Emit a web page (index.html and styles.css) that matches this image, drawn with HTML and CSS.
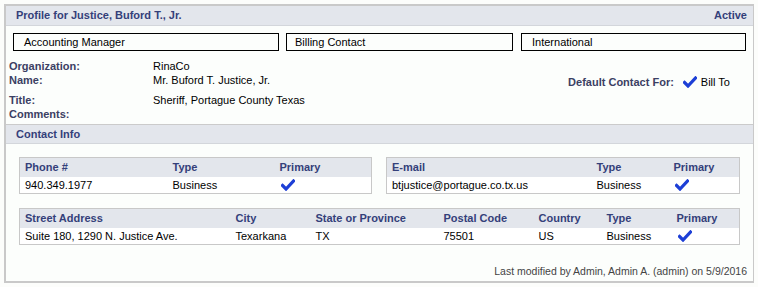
FILE: index.html
```html
<!DOCTYPE html>
<html lang="en">
<head>
    <meta charset="UTF-8">
    <title>Profile for Justice, Buford T., Jr.</title>
    <link rel="stylesheet" href="styles.css">
</head>
<body>
    <div class="panel">
        <div class="panel-head">
            <span>Profile for Justice, Buford T., Jr.</span>
            <span>Active</span>
        </div>
        <div class="tags">
            <div class="tag tag-1">Accounting Manager</div>
            <div class="tag tag-2">Billing Contact</div>
            <div class="tag tag-3">International</div>
        </div>
        <div class="fields">
            <div class="label">Organization:</div>
            <div class="value">RinaCo</div>
            <div></div>
            <div class="label name-row">Name:</div>
            <div class="value name-row">Mr. Buford T. Justice, Jr.</div>
            <div class="default-for name-row">
                <span class="label">Default Contact For:</span>
                <svg class="check" width="14" height="12" viewBox="0 0 14 12"><path d="M1.5 6.5 L5 10 L12.5 2" fill="none" stroke="#1d3fd6" stroke-width="3.2" stroke-linecap="square"/></svg>
                <span class="value">Bill To</span>
            </div>
            <div class="label">Title:</div>
            <div class="value">Sheriff, Portague County Texas</div>
            <div></div>
            <div class="label">Comments:</div>
            <div class="value"></div>
            <div></div>
        </div>
        <div class="section-head">Contact Info</div>
        <div class="contact-row">
            <table class="grid phone">
                <colgroup><col style="width:148px"><col style="width:107px"><col></colgroup>
                <tr><th>Phone #</th><th>Type</th><th>Primary</th></tr>
                <tr>
                    <td>940.349.1977</td>
                    <td>Business</td>
                    <td><svg class="check" width="14" height="12" viewBox="0 0 14 12"><path d="M1.5 6.5 L5 10 L12.5 2" fill="none" stroke="#1d3fd6" stroke-width="3.2" stroke-linecap="square"/></svg></td>
                </tr>
            </table>
            <table class="grid email">
                <colgroup><col style="width:205px"><col style="width:77px"><col></colgroup>
                <tr><th>E-mail</th><th>Type</th><th>Primary</th></tr>
                <tr>
                    <td>btjustice@portague.co.tx.us</td>
                    <td>Business</td>
                    <td><svg class="check" width="14" height="12" viewBox="0 0 14 12"><path d="M1.5 6.5 L5 10 L12.5 2" fill="none" stroke="#1d3fd6" stroke-width="3.2" stroke-linecap="square"/></svg></td>
                </tr>
            </table>
        </div>
        <table class="grid address">
            <colgroup>
                <col style="width:211px"><col style="width:80px"><col style="width:128px">
                <col style="width:95px"><col style="width:68px"><col style="width:70px"><col>
            </colgroup>
            <tr>
                <th>Street Address</th><th>City</th><th>State or Province</th>
                <th>Postal Code</th><th>Country</th><th>Type</th><th>Primary</th>
            </tr>
            <tr>
                <td>Suite 180, 1290 N. Justice Ave.</td>
                <td>Texarkana</td>
                <td>TX</td>
                <td>75501</td>
                <td>US</td>
                <td>Business</td>
                <td><svg class="check" width="14" height="12" viewBox="0 0 14 12"><path d="M1.5 6.5 L5 10 L12.5 2" fill="none" stroke="#1d3fd6" stroke-width="3.2" stroke-linecap="square"/></svg></td>
            </tr>
        </table>
        <div class="modified">Last modified by Admin, Admin A. (admin) on 5/9/2016</div>
    </div>
</body>
</html>
```

FILE: styles.css
```css
body {
    margin: 4px;
    font-family: "Liberation Sans", Arial, sans-serif;
    font-size: 11px;
    color: #000;
    background-color: #fcfdfb;
}
.panel {
    width: 747px;
    border: 2px solid #c9c9c9;
    background-color: #fcfefc;
}
.panel-head {
    display: flex;
    justify-content: space-between;
    height: 19px;
    line-height: 19px;
    padding: 0 6px 0 10px;
    background-color: #e3e6ec;
    border-bottom: 1px solid #d3d6db;
    color: #34407a;
    font-weight: bold;
}
.tags {
    display: flex;
    gap: 7px;
    margin: 7px 0 0 7px;
}
.tag {
    height: 16px;
    line-height: 16px;
    border: 1px solid #000;
    padding-left: 10px;
    box-sizing: content-box;
}
.tag-1 { width: 254px; }
.tag-2 { width: 217px; padding-left: 8px; margin-right: 1px; }
.tag-3 { width: 213px; }
.fields {
    display: grid;
    grid-template-columns: 144px 1fr auto;
    margin: 8px 0 0 3px;
    line-height: 14px;
}
.label {
    color: #3b4063;
    font-weight: bold;
}
.name-row {
    height: 20px;
}
.default-for {
    display: flex;
    align-items: center;
    height: 14px;
    margin: 2px 23px 0 0;
}
.default-for .check {
    margin: 0 4px 0 9px;
}
.section-head {
    margin-top: 3px;
    height: 18px;
    line-height: 18px;
    padding-left: 10px;
    background-color: #e3e6ec;
    border-top: 1px solid #cbcbcb;
    border-bottom: 1px solid #d3d6db;
    color: #34407a;
    font-weight: bold;
}
.contact-row {
    display: flex;
    gap: 14px;
    margin: 13px 0 0 13px;
}
.grid {
    border-collapse: collapse;
    table-layout: fixed;
    border: 1px solid #c8c8c8;
    background-color: #fff;
}
.grid th {
    height: 17px;
    padding: 0 0 2px 5px;
    text-align: left;
    background-color: #e3e6ec;
    color: #34407a;
    font-weight: bold;
}
.grid td {
    height: 15px;
    padding: 0 0 1px 5px;
    vertical-align: middle;
}
.grid td .check {
    display: block;
    margin-left: 1px;
}
.phone { width: 353px; }
.email { width: 354px; }
.address {
    width: 721px;
    margin: 14px 0 0 13px;
}
.modified {
    margin-top: 19px;
    padding: 0 6px 3px 0;
    line-height: 14px;
    font-size: 10.5px;
    text-align: right;
    color: #444;
}
```
